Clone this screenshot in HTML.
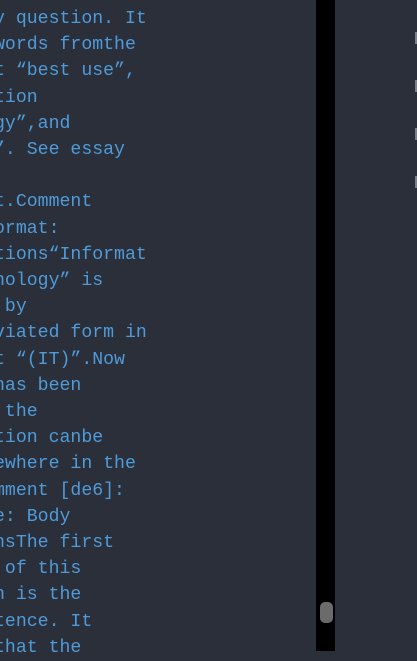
<!DOCTYPE html>
<html><head><style>
html,body{margin:0;padding:0;}
body{width:417px;height:651px;background:#2b2f3a;position:relative;overflow:hidden;}
.t{position:absolute;left:-6px;top:6px;font-family:"Liberation Mono",monospace;font-size:18.2px;line-height:26.2px;color:#4f9bd9;white-space:pre;}
.bar{position:absolute;left:316px;top:0;width:19px;height:651px;background:#000;}
.thumb{position:absolute;left:320px;top:602px;width:13px;height:21px;border-radius:5px;background:#6b6b6b;}
.m{position:absolute;left:415px;width:2px;height:12px;background:#7a7f8a;}
</style></head><body>
<div class="t">y question. It
words fromthe
t “best use”,
tion
gy”,and
”. See essay

t.Comment
ormat:
tions“Informat
nology” is
 by
viated form in
t “(IT)”.Now
has been
 the
tion canbe
ewhere in the
mment [de6]:
e: Body
nsThe first
 of this
n is the
tence. It
that the</div>
<div class="bar"></div>
<div class="thumb"></div>
<div class="m" style="top:32px"></div>
<div class="m" style="top:80px"></div>
<div class="m" style="top:128px"></div>
<div class="m" style="top:176px"></div>
</body></html>
